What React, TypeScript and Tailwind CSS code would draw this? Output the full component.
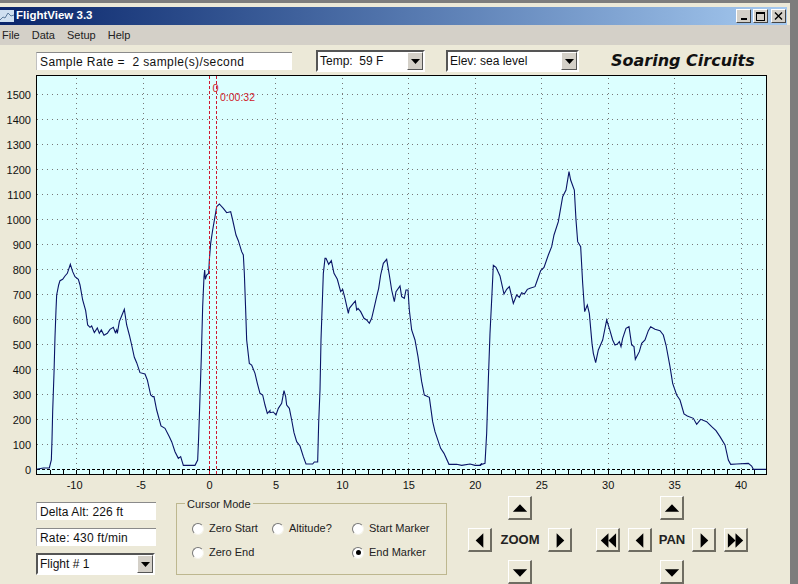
import React from "react";

type Pt = [number, number];

// traced from the reference, grouped by the crop they were read off
const seg = (ox: number, oy: number, pts: Pt[]): Pt[] =>
  pts.map(([x, y]) => [ox + x / 3, oy + y / 3]);

const trace: Pt[] = [
  ...seg(30, 240, [[20,688],[40,684],[58,684],[64,660],[66,600],[68,515],[72,400],[75,290],[78,210],[80,165],[86,135],[90,122],[98,118],[105,108],[112,100],[121,73],[128,95],[135,110],[145,118],[150,135],[158,180],[167,212],[173,255],[180,262],[185,258],[193,278],[202,264],[208,280],[214,270],[222,286],[232,280],[240,268],[250,262],[256,278],[260,270],[262,280],[268,245],[276,225],[283,208],[290,255],[298,285],[305,315],[313,352],[320,368],[330,398],[345,402],[352,420],[362,465],[368,470],[372,470],[380,510],[393,558],[405,565],[418,590],[425,605],[435,635],[445,655],[452,650],[460,676],[495,676],[503,660],[506,590],[510,470],[514,350],[518,200],[522,110],[524,90],[526,118],[530,105],[536,100]]),
  ...seg(190, 70, [[58,570],[62,520],[68,480],[75,440],[80,410],[88,402],[100,415],[110,428],[122,425],[128,450],[138,495],[145,512],[155,545],[160,555],[163,610],[167,720]]),
  ...seg(30, 240, [[650,300],[658,370],[665,375],[675,400],[682,430],[690,460],[698,465],[705,495],[712,520],[720,512]]),
  ...seg(270, 240, [[0,518],[10,516],[18,525],[25,505],[35,490],[42,452],[47,470],[50,495],[58,505],[65,540],[72,578],[80,605],[90,618],[100,650],[108,672],[128,672],[133,666],[143,666],[146,550],[150,450],[153,300],[157,185],[160,100],[165,55],[168,55],[176,73],[184,62],[192,100],[202,118],[212,155],[218,148],[225,175],[235,220],[238,205],[250,190],[256,183],[260,210],[264,205],[272,215],[282,235],[290,240],[298,250],[305,235],[312,205],[320,170],[326,145],[332,105],[340,70],[350,58],[358,105],[365,150],[373,185],[378,155],[390,138],[395,170],[403,175],[408,150],[414,150],[418,210],[425,270],[435,300],[444,350],[455,425],[463,465],[478,472],[488,545],[495,575],[512,625],[522,640],[537,673],[560,673],[575,676],[600,672],[615,676],[632,676],[636,670]]),
  ...seg(480, 160, [[0,915],[15,910],[20,820],[25,660],[30,520],[36,400],[40,316],[48,322],[60,348],[72,402],[80,388],[88,380],[100,430],[110,405],[118,412],[125,398],[133,402],[142,388],[150,385],[165,380],[172,360],[182,332],[192,322],[205,285],[215,260],[222,225],[235,185],[248,110],[258,90],[267,35],[272,60],[283,90],[288,180],[293,245],[302,260],[308,370],[314,455],[322,435],[328,460],[336,550],[340,580],[347,608],[355,570],[368,540],[380,480],[388,505],[398,540],[405,555],[412,552],[418,545],[423,560],[428,535],[438,505],[447,500],[455,555],[462,560],[466,598],[478,575],[485,550],[495,540],[505,512],[512,500],[525,508],[540,512],[550,525],[558,555],[570,620],[578,670],[590,705],[600,720],[612,762],[622,768],[640,775],[650,793],[662,778],[680,785],[695,800],[708,812],[720,830],[735,855],[745,900],[752,913],[770,912],[805,910],[815,918],[820,928],[858,928]]),
];

const yVals = Array.from({ length: 16 }, (_, i) => i * 100);
const xVals = [-10, -5, 0, 5, 10, 15, 20, 25, 30, 35, 40];
const xPos = (v: number) => 209.5 + v * 13.29;
const yPos = (v: number) => 469.5 - v * 0.25;
// grid, ticks and cursors sit on whole pixels like the original GDI drawing
const snap = (n: number) => Math.floor(n) + 0.5;

function Chart() {
  const ticks: number[] = [];
  for (let v = -12; v <= 41; v++) ticks.push(snap(xPos(v)));
  return (
    <svg width={790} height={420} viewBox="0 75 790 420" className="block">
      <rect x={36.5} y={75.5} width={730} height={399} fill="#dcffff" stroke="#000" />
      {yVals.slice(1).map((v) => (
        <line key={v} x1={37} x2={766} y1={snap(yPos(v))} y2={snap(yPos(v))} stroke="#777" strokeDasharray="1 4" />
      ))}
      {xVals.filter((v) => v !== 0).map((v) => (
        <line key={v} x1={snap(xPos(v))} x2={snap(xPos(v))} y1={78} y2={470} stroke="#777" strokeDasharray="1 4" />
      ))}
      <line x1={37} x2={766} y1={469.5} y2={469.5} stroke="#000" strokeDasharray="3 2" />
      {ticks.map((x) => (
        <line key={x} x1={x} x2={x} y1={470} y2={475} stroke="#000" />
      ))}
      <polyline
        points={trace.map((p) => p.join(",")).join(" ")}
        fill="none"
        stroke="#0a1466"
        strokeWidth={1.1}
      />
      <line x1={209.5} x2={209.5} y1={76} y2={474} stroke="#d01830" strokeDasharray="3 2" />
      <line x1={216.5} x2={216.5} y1={76} y2={474} stroke="#d01830" strokeDasharray="3 2" />
      <g className="font-['Liberation_Sans',sans-serif] text-[11px]">
        <text x={212.5} y={92} fill="#d0202a">0</text>
        <text x={220} y={101} fill="#d0202a" className="text-[10.5px]">0:00:32</text>
        {yVals.map((v) => (
          <text key={v} x={31} y={yPos(v) + 4} textAnchor="end" fill="#111">{v}</text>
        ))}
        {xVals.map((v) => (
          <text key={v} x={xPos(v) + (v < 0 ? -2 : 0)} y={489} textAnchor="middle" fill="#111">{v}</text>
        ))}
      </g>
    </svg>
  );
}

function Arrow({ dir, double }: { dir: "up" | "down" | "left" | "right"; double?: boolean }) {
  const shape: Record<string, string> = {
    up: "4,15 19,15 11.5,7",
    down: "4,8 19,8 11.5,16",
    left: "15,4 15,19 7,11.5",
    right: "8,4 8,19 16,11.5",
  };
  if (double) {
    const pts = dir === "left"
      ? ["12,4 12,19 4,11.5", "20,4 20,19 12,11.5"]
      : ["3,4 3,19 11,11.5", "11,4 11,19 19,11.5"];
    return (
      <svg width={22} height={22} viewBox="0 0 22 22">
        {pts.map((p) => <polygon key={p} points={p} fill="#000" />)}
      </svg>
    );
  }
  return (
    <svg width={22} height={22} viewBox="0 0 22 22">
      <polygon points={shape[dir]} fill="#000" />
    </svg>
  );
}

function NavBtn({ dir, double }: { dir: "up" | "down" | "left" | "right"; double?: boolean }) {
  return (
    <div className="flex h-6 w-6 items-center justify-center border border-b-2 border-r-2 border-t-white border-l-white border-b-[#6f6d62] border-r-[#6f6d62] bg-[#ece9d8]">
      <Arrow dir={dir} double={double} />
    </div>
  );
}

function Select({ label, width }: { label: string; width: string }) {
  return (
    <div className={`flex h-[22px] items-center justify-between border-2 border-t-[#555] border-l-[#555] border-r-white border-b-white bg-white ${width}`}>
      <span className="whitespace-pre pl-[2px] text-[12px] text-[#111]">{label}</span>
      <div className="flex h-[18px] w-[16px] items-center justify-center border border-t-white border-l-white border-r-[#555] border-b-[#555] bg-[#d4d0c8]">
        <svg width={9} height={5} viewBox="0 0 9 5"><polygon points="0,0 9,0 4.5,5" fill="#000" /></svg>
      </div>
    </div>
  );
}

function ValueBox({ text, className }: { text: string; className: string }) {
  return (
    <div className={`flex items-center whitespace-pre border-t border-l border-t-[#8a8a8a] border-l-[#c0c0c0] bg-white pl-[3px] text-[12px] text-[#111] ${className}`}>
      {text}
    </div>
  );
}

function Radio({ label, checked }: { label: string; checked?: boolean }) {
  return (
    <div className="flex items-center gap-[5px] whitespace-nowrap text-[11px] text-[#222]">
      <div className="flex h-[12px] w-[12px] items-center justify-center rounded-full border border-t-[#777] border-l-[#777] border-r-[#f5f3ea] border-b-[#f5f3ea] bg-white">
        {checked && <div className="h-[5px] w-[5px] rounded-full bg-black" />}
      </div>
      <span>{label}</span>
    </div>
  );
}

export default function App() {
  return (
    <div className="flex h-[584px] w-[798px] overflow-hidden bg-[#7d7d7d] pt-[3px] font-['Liberation_Sans',sans-serif]">
      <div className="flex h-[581px] w-[790px] shrink-0 flex-col bg-[#ece9d8] pt-[4px]">
        {/* title bar */}
        <div className="flex h-[18px] w-[787px] items-center justify-between bg-gradient-to-r from-[#0a246a] to-[#a6caf0]">
          <div className="flex items-center gap-[2px]">
            <svg width={14} height={12} viewBox="0 0 14 12">
              <rect width={14} height={12} fill="#cfe0f0" />
              <polyline points="0,10 3,7 5,8 8,3 11,6 14,5" fill="none" stroke="#5a7a9a" />
            </svg>
            <span className="text-[11.5px] font-bold leading-none text-white">FlightView 3.3</span>
          </div>
          <div className="mr-px flex items-center">
            <div className="flex h-[14px] w-[15px] items-end justify-center border border-t-white border-l-white border-r-[#444] border-b-[#444] bg-[#d4d0c8] pb-[2px]">
              <div className="h-[2px] w-[6px] bg-black" />
            </div>
            <div className="ml-[2px] flex h-[14px] w-[15px] items-center justify-center border border-t-white border-l-white border-r-[#444] border-b-[#444] bg-[#d4d0c8]">
              <div className="h-[9px] w-[9px] border border-t-2 border-black" />
            </div>
            <div className="ml-[3px] flex h-[14px] w-[15px] items-center justify-center border border-t-white border-l-white border-r-[#444] border-b-[#444] bg-[#d4d0c8]">
              <svg width={9} height={8} viewBox="0 0 9 8"><path d="M1 0.5 L8 7.5 M8 0.5 L1 7.5" stroke="#000" strokeWidth={1.4} /></svg>
            </div>
          </div>
        </div>
        {/* menu */}
        <div className="flex h-[20px] items-center gap-[12px] bg-[#d4d0c8] pl-[2px] text-[11px] text-[#222]">
          <span>File</span>
          <span>Data</span>
          <span>Setup</span>
          <span>Help</span>
        </div>
        {/* controls */}
        <div className="flex h-[30px] items-center pl-[36px] pt-[2px]">
          <ValueBox text="Sample Rate =  2 sample(s)/second" className="h-[18px] w-[256px] tracking-[0.4px]" />
          <div className="ml-[24px]">
            <Select label="Temp:  59 F" width="w-[109px]" />
          </div>
          <div className="ml-[21px]">
            <Select label="Elev: sea level" width="w-[133px]" />
          </div>
          <span className="ml-[32px] font-['DejaVu_Sans',sans-serif] text-[16px] font-bold italic text-[#111]">Soaring Circuits</span>
        </div>
        <Chart />
        {/* bottom controls */}
        <div className="flex pl-[36px] pt-px">
          <div className="flex w-[120px] flex-col pt-[6px]">
            <ValueBox text="Delta Alt: 226 ft" className="h-[18px] tracking-[0.1px]" />
            <ValueBox text="Rate: 430 ft/min" className="mt-2 h-[18px] tracking-[0.2px]" />
            <div className="mt-[7px]">
              <Select label="Flight # 1" width="w-[119px]" />
            </div>
          </div>
          <div className="relative ml-5 mt-[7px] h-[72px] w-[271px] border border-[#bdb78f]">
            <span className="absolute -top-[7px] left-[8px] bg-[#ece9d8] px-[2px] text-[11px] leading-[14px] text-[#222]">Cursor Mode</span>
            <div className="grid grid-cols-[80px_80px_80px] gap-y-[9px] pl-[15px] pt-[17px] leading-[15px]">
              <Radio label="Zero Start" />
              <Radio label="Altitude?" />
              <Radio label="Start Marker" />
              <Radio label="Zero End" />
              <div />
              <Radio label="End Marker" checked />
            </div>
          </div>
          {/* zoom pad */}
          <div className="ml-[21px] grid w-[104px] grid-cols-[24px_1fr_24px] grid-rows-[24px_24px_24px] gap-y-2">
            <div className="col-span-3 flex justify-center"><NavBtn dir="up" /></div>
            <NavBtn dir="left" />
            <div className="flex items-center justify-center text-[13px] font-bold text-[#222]">ZOOM</div>
            <NavBtn dir="right" />
            <div className="col-span-3 flex justify-center"><NavBtn dir="down" /></div>
          </div>
          {/* pan pad */}
          <div className="ml-6 grid w-[152px] grid-rows-[24px_24px_24px] gap-y-2">
            <div className="flex justify-center"><NavBtn dir="up" /></div>
            <div className="flex items-center">
              <NavBtn dir="left" double />
              <div className="ml-2"><NavBtn dir="left" /></div>
              <div className="w-10 text-center text-[13px] font-bold text-[#222]">PAN</div>
              <NavBtn dir="right" />
              <div className="ml-2"><NavBtn dir="right" double /></div>
            </div>
            <div className="flex justify-center"><NavBtn dir="down" /></div>
          </div>
        </div>
      </div>
    </div>
  );
}
